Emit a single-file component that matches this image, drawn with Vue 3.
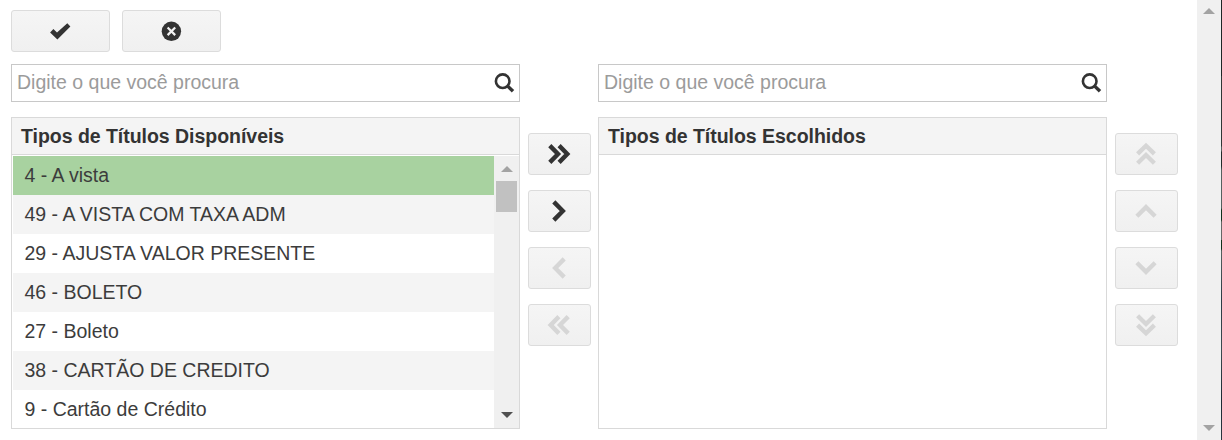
<template>
  <div class="page">
    <main class="content">
      <div class="toolbar">
        <button class="btn btn-action" type="button" aria-label="Confirmar">
          <svg width="21" height="18" viewBox="0 0 21 18">
            <path d="M0.1 10.6L3.4 7L7 10.6L17.3 1.3L20.4 4.4L7.4 17.5Z" fill="#333" />
          </svg>
        </button>
        <button class="btn btn-action" type="button" aria-label="Cancelar">
          <svg width="21" height="20" viewBox="0 0 21 20">
            <circle cx="10.4" cy="10.3" r="9.7" fill="#333" />
            <path d="M6.6 6.5L14.2 14.1M14.2 6.5L6.6 14.1" stroke="#f3f3f3" stroke-width="2.2" />
          </svg>
        </button>
      </div>

      <div class="picklist">
        <section class="column">
          <label class="search">
            <input v-model="searchAvailable" type="text" placeholder="Digite o que você procura" />
            <svg width="22" height="22" viewBox="0 0 22 22">
              <circle cx="9.7" cy="9.2" r="6.8" />
              <path d="M14.4 13.9L20 19.3" />
            </svg>
          </label>
          <div class="panel">
            <div class="panel-title">Tipos de Títulos Disponíveis</div>
            <div class="panel-body">
              <ul class="list">
                <li
                  v-for="item in filteredItems"
                  :key="item.id"
                  :class="{ selected: item.id === selectedId }"
                  @click="selectedId = item.id"
                >{{ item.id }} - {{ item.name }}</li>
              </ul>
              <div class="list-scroll">
                <svg width="12" height="6" viewBox="0 0 12 6"><path d="M0 6L6 0L12 6Z" fill="#a3a3a3" /></svg>
                <div class="thumb"></div>
                <svg class="arrow-end" width="12" height="6" viewBox="0 0 12 6"><path d="M0 0H12L6 6Z" fill="#505050" /></svg>
              </div>
            </div>
          </div>
        </section>

        <div class="controls">
          <button
            v-for="btn in moveButtons"
            :key="btn.label"
            class="btn btn-move"
            type="button"
            :aria-label="btn.label"
            :disabled="btn.disabled"
          >
            <svg :class="btn.dir" width="22" height="22" viewBox="0 0 22 22">
              <path :d="btn.double ? doubleChevron : singleChevron" />
            </svg>
          </button>
        </div>

        <section class="column">
          <label class="search">
            <input v-model="searchChosen" type="text" placeholder="Digite o que você procura" />
            <svg width="22" height="22" viewBox="0 0 22 22">
              <circle cx="9.7" cy="9.2" r="6.8" />
              <path d="M14.4 13.9L20 19.3" />
            </svg>
          </label>
          <div class="panel">
            <div class="panel-title">Tipos de Títulos Escolhidos</div>
          </div>
        </section>

        <div class="controls controls-order">
          <button
            v-for="btn in orderButtons"
            :key="btn.label"
            class="btn btn-move"
            type="button"
            :aria-label="btn.label"
            disabled
          >
            <svg :class="btn.dir" width="22" height="22" viewBox="0 0 22 22">
              <path :d="btn.double ? doubleChevron : singleChevron" />
            </svg>
          </button>
        </div>
      </div>
    </main>

    <div class="page-scroll">
      <svg width="12" height="6" viewBox="0 0 12 6"><path d="M0 6L6 0L12 6Z" fill="#a3a3a3" /></svg>
      <svg width="12" height="6" viewBox="0 0 12 6"><path d="M0 0H12L6 6Z" fill="#a3a3a3" /></svg>
    </div>
    <div class="edge"></div>
  </div>
</template>

<script setup>
import { computed, ref } from 'vue'

const searchAvailable = ref('')
const searchChosen = ref('')
const selectedId = ref(4)

const items = [
  { id: 4, name: 'A vista' },
  { id: 49, name: 'A VISTA COM TAXA ADM' },
  { id: 29, name: 'AJUSTA VALOR PRESENTE' },
  { id: 46, name: 'BOLETO' },
  { id: 27, name: 'Boleto' },
  { id: 38, name: 'CARTÃO DE CREDITO' },
  { id: 9, name: 'Cartão de Crédito' },
]

const filteredItems = computed(() => {
  const term = searchAvailable.value.toLowerCase()
  return items.filter(item => `${item.id} - ${item.name}`.toLowerCase().includes(term))
})

// both point right, the direction classes rotate them
const singleChevron = 'M5.8 1.9L14.8 11L5.8 20.1'
const doubleChevron = 'M1.8 2.6L10 11L1.8 19.4M11.1 2.6L19.3 11L11.1 19.4'

const moveButtons = [
  { label: 'Adicionar todos', dir: 'right', double: true, disabled: false },
  { label: 'Adicionar', dir: 'right', double: false, disabled: false },
  { label: 'Remover', dir: 'left', double: false, disabled: true },
  { label: 'Remover todos', dir: 'left', double: true, disabled: true },
]

const orderButtons = [
  { label: 'Mover para o topo', dir: 'up', double: true },
  { label: 'Mover para cima', dir: 'up', double: false },
  { label: 'Mover para baixo', dir: 'down', double: false },
  { label: 'Mover para o fim', dir: 'down', double: true },
]
</script>

<style>
body {
  margin: 0;
  overflow: hidden;
}
</style>

<style scoped>
.page {
  display: flex;
  width: 1222px;
  height: 440px;
  overflow: hidden;
  background: #fff;
  color: #333;
  font-family: "Liberation Sans", Arial, sans-serif;
  font-size: 19.5px;
}
.page * {
  box-sizing: border-box;
}
.content {
  flex: 1;
  padding: 10px 0 0 11px;
}
.toolbar {
  display: flex;
  gap: 12px;
  margin-bottom: 12px;
}
.btn {
  display: flex;
  align-items: center;
  justify-content: center;
  height: 42px;
  padding: 0;
  border: 1px solid #dcdcdc;
  border-radius: 3px;
  background: linear-gradient(#f5f5f5, #f0f0f0);
}
.btn-action {
  width: 99px;
}
.btn-move {
  width: 63px;
  padding-right: 1px;
}
.btn-move svg {
  overflow: visible;
}
.btn-move path {
  fill: none;
  stroke: #333;
  stroke-width: 4.4;
}
.btn-move:disabled path {
  stroke: #d6d6d6;
}
.left {
  transform: rotate(180deg);
}
.up {
  transform: rotate(-90deg);
}
.down {
  transform: rotate(90deg);
}
.picklist {
  display: flex;
}
.column {
  width: 509px;
}
.search {
  display: flex;
  align-items: center;
  height: 38px;
  margin-bottom: 15px;
  padding: 0 4px 0 5px;
  border: 1px solid #c8c8c8;
}
.search input {
  flex: 1;
  min-width: 0;
  height: 34px;
  padding: 0 0 2px;
  border: 0;
  outline: 0;
  background: none;
  color: #333;
  font: inherit;
}
.search input::placeholder {
  color: #9b9b9b;
}
.search svg {
  fill: none;
  stroke: #333;
}
.search circle {
  stroke-width: 2.6;
}
.search path {
  stroke-width: 3.4;
}
.panel {
  height: 312px;
  border: 1px solid #d9d9d9;
}
.panel-title {
  height: 37px;
  padding-left: 9px;
  border-bottom: 1px solid #d9d9d9;
  background: #f4f4f4;
  font-weight: bold;
  letter-spacing: -0.03px;
  line-height: 36px;
}
.panel-body {
  display: flex;
  height: 273px;
  padding: 1px 0 0 1px;
}
.list {
  flex: 1;
  margin: 0;
  padding: 0;
  overflow: hidden;
  color: #3c3c3c;
  list-style: none;
}
.list li {
  height: 39px;
  padding-left: 11.5px;
  line-height: 38px;
}
.list li:nth-child(even) {
  background: #f4f4f4;
}
.list li.selected {
  background: #a8d2a0;
}
.list-scroll {
  display: flex;
  flex-direction: column;
  align-items: center;
  width: 25px;
  padding: 10px 0;
  background: #f0f0f0;
}
.thumb {
  width: 21px;
  height: 31px;
  margin-top: 9px;
  background: #c1c1c1;
}
.arrow-end {
  margin-top: auto;
}
.controls {
  display: flex;
  flex-direction: column;
  gap: 15px;
  padding: 69px 7px 0 8px;
}
.controls-order {
  padding-right: 0;
}
.page-scroll {
  display: flex;
  flex-direction: column;
  align-items: center;
  justify-content: space-between;
  width: 24px;
  padding: 8px 0 9px;
  background: #f0f0f0;
}
.edge {
  width: 1px;
  background: linear-gradient(#1e2626 0 76px, #303636 76px 146px, #555c5c 147px 151px, #222a2a 152px 166px, #55605f 170px 208px, #10301c 210px 220px, #666 222px 240px, #10301c 240px 249px, #55605f 251px, #2c3a44 300px, #3c4a50 350px, #1c2a34 400px, #2c3640);
}
</style>
